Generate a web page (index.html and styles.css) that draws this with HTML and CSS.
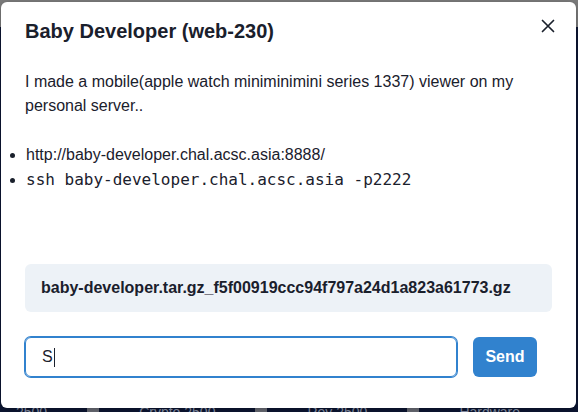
FILE: index.html
```html
<!DOCTYPE html>
<html lang="en">
<head>
<meta charset="utf-8">
<title>Baby Developer (web-230)</title>
<link rel="stylesheet" href="styles.css">
</head>
<body>
<div class="page">
  <div class="page-header"></div>
  <div class="page-main">
    <div class="tiles">
      <span class="tile-text">2500</span>
      <span class="tile-gap"></span>
      <span class="tile-text">Crypto 2500</span>
      <span class="tile-gap"></span>
      <span class="tile-text">Rev 2500</span>
      <span class="tile-gap"></span>
      <span class="tile-text">Hardware</span>
    </div>
  </div>
</div>
<section class="modal" role="dialog" aria-labelledby="modal-title">
  <header class="modal-header" id="modal-title">Baby Developer (web-230)</header>
  <button class="close-btn" aria-label="Close">
    <svg width="14" height="14" viewBox="0 0 14 14"><path d="M1.5 1.5 L12.5 12.5 M12.5 1.5 L1.5 12.5" stroke="#1a202c" stroke-width="1.7" stroke-linecap="round" fill="none"/></svg>
  </button>
  <div class="modal-body">
    <p class="desc">I made a mobile(apple watch miniminimini series 1337) viewer on my personal server..</p>
    <ul class="links">
      <li>http://baby-developer.chal.acsc.asia:8888/</li>
      <li><code>ssh baby-developer.chal.acsc.asia -p2222</code></li>
    </ul>
  </div>
  <div class="file-box">baby-developer.tar.gz_f5f00919ccc94f797a24d1a823a61773.gz</div>
  <form class="flag-row">
    <div class="flag-input">S<span class="caret"></span></div>
    <button type="button" class="send-btn">Send</button>
  </form>
</section>
</body>
</html>
```

FILE: styles.css
```css
html, body {
  margin: 0;
  padding: 0;
}
body {
  width: 578px;
  height: 412px;
  overflow: hidden;
  position: relative;
  font-family: "Liberation Sans", Arial, sans-serif;
  color: #1a202c;
  background: #0c1633;
}
.page {
  height: 412px;
  display: flex;
  flex-direction: column;
}
.page-header {
  height: 27px;
  background: #7d7d7d;
}
.page-main {
  flex: 1;
  display: flex;
  flex-direction: column;
  justify-content: flex-end;
  background: #0c1633;
}
.tiles {
  display: flex;
  align-items: flex-end;
  height: 16px;
  padding-left: 2px;
  gap: 0;
  font-size: 14px;
  color: #8e96ad;
  line-height: 12px;
  padding-bottom: 0;
  margin-bottom: -6px;
}
.tile-text {
  padding: 0 14px;
}
.tile-gap {
  width: 12px;
  height: 16px;
  background: #6c6f78;
  margin: 0 26px;
}
.modal {
  position: absolute;
  left: 1px;
  top: 2px;
  width: 575px;
  height: 406px;
  box-sizing: border-box;
  background: #ffffff;
  border-radius: 6px;
  box-shadow: 0 2px 8px rgba(0, 0, 0, 0.3);
  display: flex;
  flex-direction: column;
}
.modal-header {
  padding: 16px 24px;
  font-size: 20px;
  font-weight: 700;
  line-height: 27px;
}
.close-btn {
  position: absolute;
  top: 8px;
  right: 12px;
  width: 32px;
  height: 32px;
  border: 0;
  background: transparent;
  padding: 0;
  display: flex;
  align-items: center;
  justify-content: center;
  border-radius: 6px;
}
.modal-body {
  padding: 9px 24px 0;
  font-size: 16px;
  line-height: 24px;
}
.desc {
  margin: 0;
}
.links {
  margin: 24px 0 0;
  padding: 0 0 0 1px;
}
.links li {
  line-height: 25px;
}
.links code {
  font-family: "DejaVu Sans Mono", monospace;
  font-size: 16px;
}
.file-box {
  margin: 72px 24px 0;
  padding: 12px 16px;
  background: #edf2f7;
  border-radius: 6px;
  font-size: 16px;
  font-weight: 700;
  line-height: 24px;
}
.flag-row {
  margin: 25px 39px 0 24px;
  display: flex;
  gap: 16px;
}
.flag-input {
  flex: 1;
  height: 40px;
  box-sizing: border-box;
  border: 1px solid #3182ce;
  box-shadow: 0 0 0 1px #3182ce;
  border-radius: 6px;
  padding: 0 16px;
  display: flex;
  align-items: center;
  font-size: 16px;
  color: #1a202c;
}
.caret {
  display: inline-block;
  width: 1px;
  height: 19px;
  background: #1a202c;
  margin-left: 1px;
}
.send-btn {
  width: 64px;
  height: 40px;
  border: 0;
  border-radius: 6px;
  background: #3182ce;
  color: #ffffff;
  font-family: "Liberation Sans", Arial, sans-serif;
  font-size: 16px;
  font-weight: 700;
  padding: 0;
}
```
